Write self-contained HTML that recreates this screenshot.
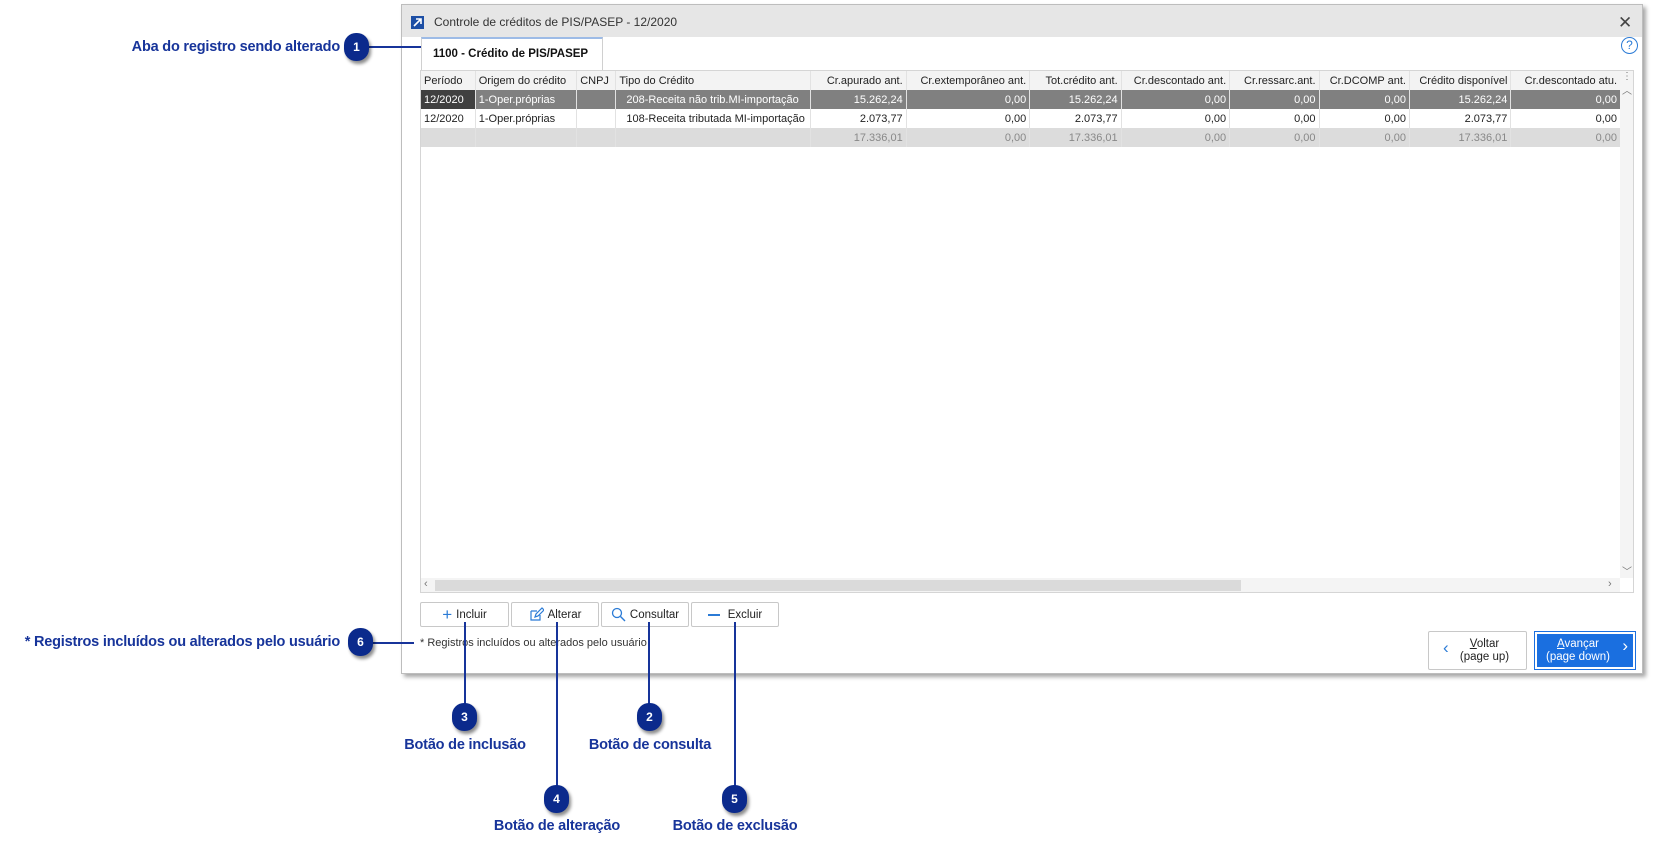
<!DOCTYPE html>
<html><head><meta charset="utf-8"><style>
*{box-sizing:border-box;margin:0;padding:0}
body{width:1667px;height:852px;background:#fff;position:relative;overflow:hidden;font-family:"Liberation Sans",sans-serif}
.abs{position:absolute}
.lbl{position:absolute;color:#17349a;font-weight:bold;font-size:14.5px;letter-spacing:-0.2px;white-space:nowrap;line-height:18px}
.c{transform:translateX(-50%)}
.num{position:absolute;width:25px;height:28px;border-radius:12px;background:#0b2a8c;color:#fff;font-weight:bold;font-size:12px;text-align:center;line-height:28px;box-shadow:2px 3px 3px rgba(0,0,0,.45)}
.vl{position:absolute;width:1.5px;background:#17349a}
.hl{position:absolute;height:1.5px;background:#17349a}
.win{left:401px;top:4px;width:1242px;height:670px;background:#fafafa;border:1px solid #bdbdbd;box-shadow:3px 3px 4px rgba(0,0,0,.35)}
table{border-collapse:collapse;font-size:11px;table-layout:fixed}
td{height:19px;padding:0 3px;border-right:1px solid #e2e2e2;white-space:nowrap;overflow:hidden}
.r{text-align:right}
.btn{position:absolute;top:597px;height:25px;border:1px solid #c8c8c8;border-radius:2px;background:#fff;font-size:11.5px;color:#222;display:flex;align-items:center;justify-content:center;gap:4px}
</style></head><body>
<div class="abs win">
 <div class="abs" style="left:0;top:0;width:1240px;height:32px;background:#e6e6e6"></div>
 <div class="abs" style="left:9px;top:11px;width:13px;height:13px;background:#1d4fa5"><svg width="13" height="13"><path d="M3 10L10 3M5 3h5v5" stroke="#fff" stroke-width="1.6" fill="none"/></svg></div>
 <div class="abs" style="left:32px;top:10px;font-size:12px;color:#333">Controle de créditos de PIS/PASEP - 12/2020</div>
 <div class="abs" style="left:1216px;top:8px;font-size:17px;color:#444">✕</div>
 <div class="abs" style="left:0;top:32px;width:1240px;height:636px;background:#fff"></div>
 <div class="abs" style="left:19px;top:32px;width:182px;height:35px;background:#fff;border:1px solid #d0d0d0;border-top:2px solid #9dbbe6;border-bottom:none;font-weight:bold;font-size:11.5px;line-height:30px;padding-left:11px;color:#111">1100 - Crédito de PIS/PASEP</div>
 <div class="abs" style="left:1219px;top:32px;width:17px;height:17px;border:1.3px solid #2b7bd6;border-radius:50%;color:#2b7bd6;font-size:12px;text-align:center;line-height:15px">?</div>
 <div class="abs" style="left:18px;top:65px;width:1214px;height:523px;border:1px solid #d5d5d5;background:#fff;overflow:hidden">
  <table style="width:1200px">
   <colgroup><col style="width:54px"><col style="width:101px"><col style="width:39px"><col style="width:194px"><col style="width:95px"><col style="width:123px"><col style="width:91px"><col style="width:108px"><col style="width:89px"><col style="width:90px"><col style="width:101px"><col style="width:109px"></colgroup>
   <tr style="background:#f3f3f3;color:#222"><td>Período</td><td>Origem do crédito</td><td>CNPJ</td><td>Tipo do Crédito</td><td class="r">Cr.apurado ant.</td><td class="r">Cr.extemporâneo ant.</td><td class="r">Tot.crédito ant.</td><td class="r">Cr.descontado ant.</td><td class="r">Cr.ressarc.ant.</td><td class="r">Cr.DCOMP ant.</td><td class="r">Crédito disponível</td><td class="r">Cr.descontado atu.</td></tr>
   <tr style="background:#808080;color:#fff"><td style="background:#404040">12/2020</td><td>1-Oper.próprias</td><td></td><td style="padding-left:10px">208-Receita não trib.MI-importação</td><td class="r">15.262,24</td><td class="r">0,00</td><td class="r">15.262,24</td><td class="r">0,00</td><td class="r">0,00</td><td class="r">0,00</td><td class="r">15.262,24</td><td class="r">0,00</td></tr>
   <tr style="color:#222"><td>12/2020</td><td>1-Oper.próprias</td><td></td><td style="padding-left:10px">108-Receita tributada MI-importação</td><td class="r">2.073,77</td><td class="r">0,00</td><td class="r">2.073,77</td><td class="r">0,00</td><td class="r">0,00</td><td class="r">0,00</td><td class="r">2.073,77</td><td class="r">0,00</td></tr>
   <tr style="background:#dcdcdc;color:#888"><td></td><td></td><td></td><td></td><td class="r">17.336,01</td><td class="r">0,00</td><td class="r">17.336,01</td><td class="r">0,00</td><td class="r">0,00</td><td class="r">0,00</td><td class="r">17.336,01</td><td class="r">0,00</td></tr>
  </table>
  <div class="abs" style="left:1199px;top:0;width:14px;height:507px;background:#f4f4f4;font-size:10px;color:#777;text-align:center">⋮<br>︿</div>
  <div class="abs" style="left:1199px;top:492px;width:14px;font-size:10px;color:#777;text-align:center">﹀</div>
  <div class="abs" style="left:0;top:507px;width:1199px;height:15px;background:#f4f4f4"></div>
  <div class="abs" style="left:14px;top:509px;width:806px;height:11px;background:#dadada"></div>
  <div class="abs" style="left:3px;top:507px;font-size:11px;color:#777">‹</div>
  <div class="abs" style="left:1187px;top:507px;font-size:11px;color:#777">›</div>
 </div>
 <div class="btn" style="left:18px;width:89px"><span style="color:#2b7bd6;font-size:17px">+</span>Incluir</div>
 <div class="btn" style="left:109px;width:88px"><svg width="15" height="15"><path d="M2 4h6M2 4v9h9V8M6 10l1-3 6-6 2 2-6 6z" stroke="#2b7bd6" stroke-width="1.2" fill="none"/></svg>Alterar</div>
 <div class="btn" style="left:199px;width:88px"><svg width="15" height="15"><circle cx="6" cy="6" r="4.5" stroke="#2b7bd6" stroke-width="1.3" fill="none"/><path d="M9.5 9.5L14 14" stroke="#2b7bd6" stroke-width="1.4"/></svg>Consultar</div>
 <div class="btn" style="left:289px;width:88px"><span style="display:inline-block;width:12px;height:2px;background:#2b7bd6;margin-right:4px"></span>Excluir</div>
 <div class="abs" style="left:18px;top:632px;font-size:11px;color:#333">* Registros incluídos ou alterados pelo usuário</div>
 <div class="abs" style="left:1026px;top:626px;width:99px;height:39px;border:1px solid #c8c8c8;border-radius:2px;background:#fff;font-size:11.5px;color:#222;text-align:center;line-height:13px;padding-top:6px;padding-left:14px"><u>V</u>oltar<br>(page up)<span class="abs" style="left:14px;top:9px;color:#2b7bd6;font-size:17px">‹</span></div>
 <div class="abs" style="left:1132px;top:626px;width:102px;height:39px;border:1px solid #1a6fe0;padding:2px;background:#fff"><div style="width:100%;height:100%;background:#1a6fe0;color:#fff;font-size:11.5px;line-height:13px;text-align:center;padding-top:4px;padding-right:14px;position:relative"><u>A</u>vançar<br>(page down)<span class="abs" style="right:5px;top:5px;font-size:17px">›</span></div></div>
</div>

<div class="lbl" style="right:1327px;top:38px">Aba do registro sendo alterado</div>
<div class="hl" style="left:368px;top:46px;width:53px"></div>
<div class="num" style="left:344px;top:33px">1</div>

<div class="lbl" style="right:1327px;top:633px">* Registros incluídos ou alterados pelo usuário</div>
<div class="hl" style="left:368px;top:642px;width:46px"></div>
<div class="num" style="left:348px;top:628px">6</div>

<div class="vl" style="left:464px;top:622px;height:82px"></div>
<div class="vl" style="left:556px;top:622px;height:164px"></div>
<div class="vl" style="left:648px;top:622px;height:82px"></div>
<div class="vl" style="left:734px;top:622px;height:164px"></div>
<div class="num" style="left:452px;top:703px">3</div>
<div class="num" style="left:637px;top:703px">2</div>
<div class="num" style="left:544px;top:785px">4</div>
<div class="num" style="left:722px;top:785px">5</div>
<div class="lbl c" style="left:465px;top:736px">Botão de inclusão</div>
<div class="lbl c" style="left:650px;top:736px">Botão de consulta</div>
<div class="lbl c" style="left:557px;top:817px">Botão de alteração</div>
<div class="lbl c" style="left:735px;top:817px">Botão de exclusão</div>
</body></html>
